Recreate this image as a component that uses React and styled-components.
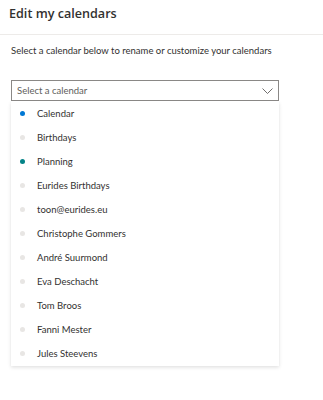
import React from 'react';
import styled, { createGlobalStyle } from 'styled-components';

const GlobalStyle = createGlobalStyle`
  body {
    margin: 0;
    background: #ffffff;
    font-family: Lato, "Noto Sans", sans-serif;
    color: #323130;
  }
`;

const Panel = styled.div`
  width: 323px;
  height: 400px;
  background: #fff;
  overflow: hidden;
`;

const Header = styled.div`
  height: 35px;
  padding: 5px 9px 0;
  border-bottom: 1px solid #edebe9;
  box-sizing: border-box;
`;

const Title = styled.h1`
  margin: 0;
  font-family: "Open Sans", sans-serif;
  font-size: 12.6px;
  line-height: 18px;
  font-weight: 600;
  color: #323130;
`;

const Body = styled.div`
  padding: 10px 11px 0 11px;
`;

const Description = styled.p`
  margin: 0;
  font-size: 9.5px;
  line-height: 12px;
  color: #323130;
`;

const Dropdown = styled.div`
  margin-top: 23px;
  width: 268px;
`;

const SelectBox = styled.div`
  height: 21px;
  border: 1px solid #8a8886;
  box-sizing: border-box;
  display: flex;
  align-items: center;
  justify-content: space-between;
  padding: 0 5px 0 5px;
  font-size: 9.5px;
  color: #605e5c;
`;

const Menu = styled.ul`
  list-style: none;
  margin: 0;
  padding: 0;
  background: #fff;
  box-shadow: 0 1.6px 3.6px rgba(0, 0, 0, 0.13), 0 0.3px 0.9px rgba(0, 0, 0, 0.11);
`;

const Item = styled.li`
  height: 24.1px;
  display: flex;
  align-items: center;
  padding-left: 9px;
  font-size: 9.5px;
  color: #323130;
`;

const Dot = styled.span`
  width: 5px;
  height: 5px;
  border-radius: 50%;
  background: ${p => p.color};
  margin-right: 12px;
  flex-shrink: 0;
`;

const calendars = [
  { name: 'Calendar', color: '#0078d4' },
  { name: 'Birthdays', color: '#e8e6e4' },
  { name: 'Planning', color: '#038387' },
  { name: 'Eurides Birthdays', color: '#e8e6e4' },
  { name: 'toon@eurides.eu', color: '#e8e6e4' },
  { name: 'Christophe Gommers', color: '#e8e6e4' },
  { name: 'André Suurmond', color: '#e8e6e4' },
  { name: 'Eva Deschacht', color: '#e8e6e4' },
  { name: 'Tom Broos', color: '#e8e6e4' },
  { name: 'Fanni Mester', color: '#e8e6e4' },
  { name: 'Jules Steevens', color: '#e8e6e4' },
];

export default function App() {
  return (
    <>
      <GlobalStyle />
      <Panel>
        <Header>
          <Title>Edit my calendars</Title>
        </Header>
        <Body>
          <Description>Select a calendar below to rename or customize your calendars</Description>
          <Dropdown>
            <SelectBox>
              <span>Select a calendar</span>
              <svg width="11" height="6" viewBox="0 0 11 6">
                <path d="M0.5 0.5 L5.5 5.5 L10.5 0.5" fill="none" stroke="#605e5c" strokeWidth="0.9" />
              </svg>
            </SelectBox>
            <Menu>
              {calendars.map(c => (
                <Item key={c.name}>
                  <Dot color={c.color} />
                  {c.name}
                </Item>
              ))}
            </Menu>
          </Dropdown>
        </Body>
      </Panel>
    </>
  );
}
